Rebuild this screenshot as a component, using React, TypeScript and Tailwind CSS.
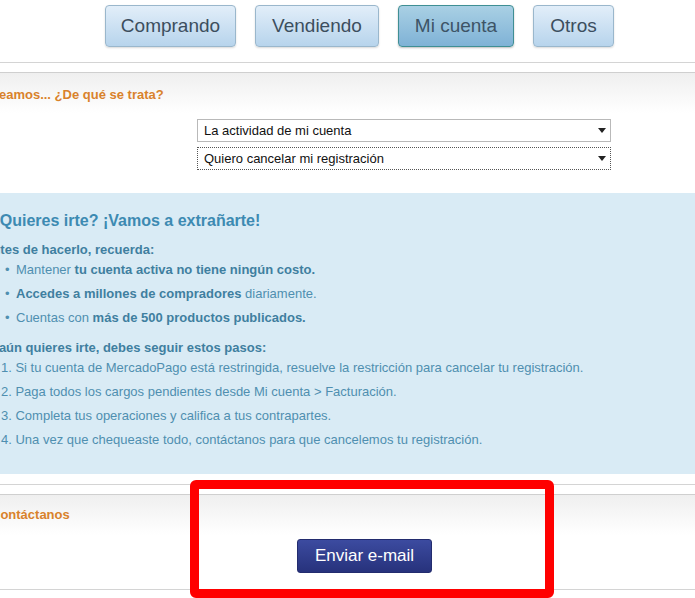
import React from "react";

const font = { fontFamily: '"Liberation Sans", Arial, sans-serif' };

function Tab({ label, active, w }: { label: string; active?: boolean; w: string }) {
  return (
    <div
      className={
        "h-[42px] flex items-center justify-center rounded-[4px] border text-[19px] " +
        w +
        " " +
        (active
          ? "border-[#3f8f94] bg-gradient-to-b from-[#a9d0e4] to-[#7fb2d6] text-[#3d5466] shadow-[0_1px_2px_rgba(0,0,0,0.25)]"
          : "border-[#9ab7cc] bg-gradient-to-b from-[#e2eef9] to-[#b7d4ec] text-[#3c4e5e] shadow-[0_1px_2px_rgba(0,0,0,0.15)]")
      }
    >
      {label}
    </div>
  );
}

function Select({ label, dotted }: { label: string; dotted?: boolean }) {
  return (
    <div
      className={
        "w-[414px] h-[23px] flex items-center justify-between pl-[6px] pr-[4px] text-[13px] text-[#111] bg-white " +
        (dotted ? "border border-dotted border-[#555]" : "border border-[#b9b9b9]")
      }
    >
      <span>{label}</span>
      <svg width="8" height="5" viewBox="0 0 8 5">
        <path d="M0 0 L8 0 L4 5 Z" fill="#222" />
      </svg>
    </div>
  );
}

export default function App() {
  return (
    <div className="relative w-[695px] h-[598px] overflow-hidden bg-white leading-[16px]" style={font}>
      {/* Tabs */}
      <div className="flex pt-[5px] pl-[105px] gap-[19px]">
        <Tab label="Comprando" w="w-[131px]" />
        <Tab label="Vendiendo" w="w-[124px]" />
        <Tab label="Mi cuenta" w="w-[116px]" active />
        <Tab label="Otros" w="w-[81px]" />
      </div>

      <div className="mt-[15px] border-t border-[#d4d4d4]" />
      <div className="mt-[9px] h-[121px] border-t border-[#cfcfcf] bg-gradient-to-b from-[#efefef] to-white to-[40px]">
        <div className="pt-[14px] ml-[-9px] text-[13px] font-bold text-[#d9822b]">
          Veamos... ¿De qué se trata?
        </div>
        <div className="pl-[197px] pt-[16px] flex flex-col gap-[5px]">
          <Select label="La actividad de mi cuenta" />
          <Select label="Quiero cancelar mi registración" dotted />
        </div>
      </div>

      {/* Blue panel */}
      <div className="h-[281px] bg-[#d9ebf5] text-[#4f8fb0] text-[13px]">
        <div className="pt-[18px] ml-[-10px] text-[16px] leading-[20px] font-bold text-[#3d8ab2]">
          ¿Quieres irte? ¡Vamos a extrañarte!
        </div>
        <div className="mt-[11px] ml-[-17px] font-bold text-[#3f7fa0]">
          Antes de hacerlo, recuerda:
        </div>
        <ul className="mt-[4px] flex flex-col gap-[8px]">
          <li className="flex">
            <span className="w-[16px] pl-[5px]">•</span>
            <span>
              Mantener <b className="text-[#3f7fa0]">tu cuenta activa no tiene ningún costo.</b>
            </span>
          </li>
          <li className="flex">
            <span className="w-[16px] pl-[5px]">•</span>
            <span>
              <b className="text-[#3f7fa0]">Accedes a millones de compradores</b> diariamente.
            </span>
          </li>
          <li className="flex">
            <span className="w-[16px] pl-[5px]">•</span>
            <span>
              Cuentas con <b className="text-[#3f7fa0]">más de 500 productos publicados.</b>
            </span>
          </li>
        </ul>
        <div className="mt-[14px] ml-[-17px] font-bold text-[#3f7fa0]">
          Si aún quieres irte, debes seguir estos pasos:
        </div>
        <ol className="mt-[4px] pl-[1px] flex flex-col gap-[8px]">
          <li>1. Si tu cuenta de MercadoPago está restringida, resuelve la restricción para cancelar tu registración.</li>
          <li>2. Paga todos los cargos pendientes desde Mi cuenta &gt; Facturación.</li>
          <li>3. Completa tus operaciones y califica a tus contrapartes.</li>
          <li>4. Una vez que chequeaste todo, contáctanos para que cancelemos tu registración.</li>
        </ol>
      </div>

      <div className="mt-[10px] border-t border-[#d4d4d4]" />
      <div className="mt-[9px] border-t border-[#cfcfcf] bg-gradient-to-b from-[#efefef] to-white to-[40px] h-[95px]">
        <div className="pt-[12px] ml-[-9px] text-[13px] font-bold text-[#d9822b]">Contáctanos</div>
        <div className="mt-[16px] ml-[297px] w-[135px] h-[34px] rounded-[3px] border border-[#232c6e] bg-gradient-to-b from-[#3c4ba0] to-[#27327c] text-white text-[17px] flex items-center justify-center">
          Enviar e-mail
        </div>
      </div>
      <div className="border-t border-[#d4d4d4]" />

      {/* Red annotation */}
      <div className="absolute left-[190px] top-[480px] w-[364px] h-[118px] border-[9px] border-[#ff0000] rounded-[6px]" />
    </div>
  );
}
